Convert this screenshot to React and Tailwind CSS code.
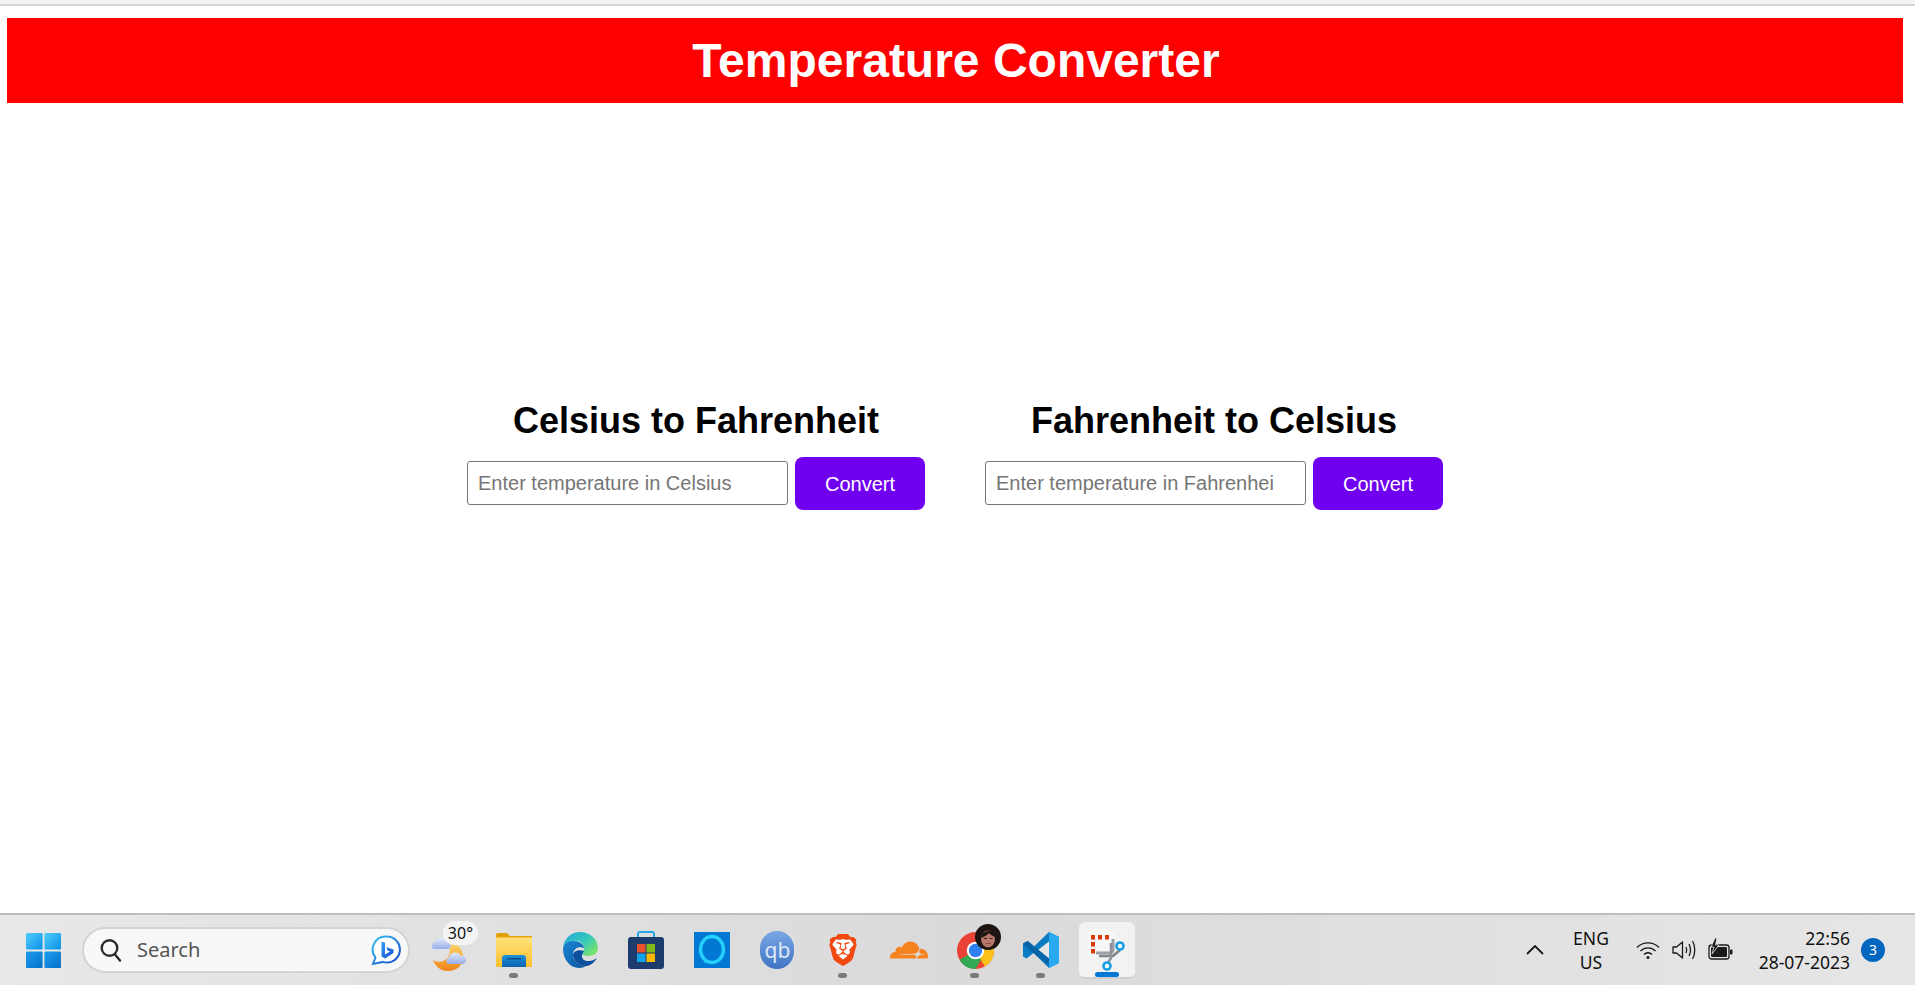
import React from "react";
import { SiBrave, SiCloudflare } from "react-icons/si";

const WindowsLogo = () => (
  <svg width="35" height="35" viewBox="0 0 35 35">
    <defs>
      <linearGradient id="winA" x1="0" y1="0" x2="1" y2="1">
        <stop offset="0" stopColor="#52cdfb" />
        <stop offset="1" stopColor="#0a8fe6" />
      </linearGradient>
      <linearGradient id="winB" x1="0" y1="0" x2="1" y2="1">
        <stop offset="0" stopColor="#1a9fee" />
        <stop offset="1" stopColor="#0670ca" />
      </linearGradient>
    </defs>
    <rect x="0" y="0" width="16.6" height="16.6" rx="1" fill="url(#winA)" />
    <rect x="18.4" y="0" width="16.6" height="16.6" rx="1" fill="url(#winA)" />
    <rect x="0" y="18.4" width="16.6" height="16.6" rx="1" fill="url(#winB)" />
    <rect x="18.4" y="18.4" width="16.6" height="16.6" rx="1" fill="url(#winB)" />
  </svg>
);

const SearchGlyph = () => (
  <svg width="22" height="24" viewBox="0 0 22 24" fill="none" stroke="#2b2b2b" strokeWidth="2.4">
    <circle cx="9.5" cy="10" r="7.8" />
    <path d="M15 16.5l5 6" strokeLinecap="round" />
  </svg>
);

const BingChat = () => (
  <svg width="32" height="32" viewBox="0 0 32 32" fill="none">
    <defs>
      <linearGradient id="bingA" x1="0" y1="0" x2="1" y2="1">
        <stop offset="0" stopColor="#36c3f0" />
        <stop offset="1" stopColor="#1746c9" />
      </linearGradient>
      <linearGradient id="bingB" x1="0" y1="0" x2="0.800" y2="1">
        <stop offset="0" stopColor="#2f9ff0" />
        <stop offset="1" stopColor="#1f55d8" />
      </linearGradient>
    </defs>
    <path d="M17 2.500a13 13 0 1 1-4 25.400L3 30l2.500-6.500A13 13 0 0 1 17 2.500z" stroke="url(#bingA)" strokeWidth="2" fill="#fff" />
    <path d="M11.500 7.500l3.500 1.300v11.700l5-2.900-2.500-1.200-1.300-3.400 7.300 2.600v3.500L15 24.500l-3.500-2z" fill="url(#bingB)" />
  </svg>
);

const WeatherIcon = () => (
  <svg width="36" height="42" viewBox="0 0 36 42">
    <defs>
      <linearGradient id="moon" x1="0" y1="0" x2="0" y2="1">
        <stop offset="0" stopColor="#fbd76a" />
        <stop offset="1" stopColor="#ee8418" />
      </linearGradient>
      <linearGradient id="cloud" x1="0" y1="0" x2="0" y2="1">
        <stop offset="0" stopColor="#e4e9fb" />
        <stop offset="1" stopColor="#98aee8" />
      </linearGradient>
    </defs>
    <path d="M3 29c4 3 12 2 15-3 3-5 2-11 0-14 7-1 15 4 15 14 0 9-7 14-15 14-8 0-13-5-15-11z" fill="url(#moon)" />
    <path d="M3 18a4 4 0 0 1 2-7 6 6 0 0 1 11-1 4 4 0 0 1 2 8z" fill="url(#cloud)" />
    <path d="M18 33a4 4 0 0 1 1-7 6.500 6.500 0 0 1 12-1 4 4 0 0 1 2 8z" fill="url(#cloud)" />
  </svg>
);

const ExplorerIcon = () => (
  <svg width="36" height="34" viewBox="0 0 36 34">
    <defs>
      <linearGradient id="folder" x1="0" y1="0" x2="0" y2="1">
        <stop offset="0" stopColor="#ffe27a" />
        <stop offset="1" stopColor="#fcbf2f" />
      </linearGradient>
      <linearGradient id="drawer" x1="0" y1="0" x2="0" y2="1">
        <stop offset="0" stopColor="#1d93dd" />
        <stop offset="1" stopColor="#0a64ad" />
      </linearGradient>
    </defs>
    <path d="M0 2a2 2 0 0 1 2-2h9l4 4h-15z" fill="#e0a106" />
    <rect x="0" y="3" width="36" height="31" rx="1" fill="#e3a60f" />
    <rect x="0" y="4.500" width="36" height="29.500" rx="1" fill="url(#folder)" />
    <path d="M6 34V25a3 3 0 0 1 3-3h18a3 3 0 0 1 3 3v9z" fill="url(#drawer)" />
    <rect x="11" y="25" width="14" height="1.500" fill="#0b4f86" />
  </svg>
);

const EdgeIcon = () => (
  <svg width="36" height="36" viewBox="0 0 36 36">
    <defs>
      <linearGradient id="edgeTop" x1="0" y1="0" x2="1" y2="0.700">
        <stop offset="0" stopColor="#23a6d8" />
        <stop offset="0.600" stopColor="#35c8bb" />
        <stop offset="1" stopColor="#7be36d" />
      </linearGradient>
      <linearGradient id="edgeLow" x1="0" y1="0" x2="0.800" y2="1">
        <stop offset="0" stopColor="#1a86d4" />
        <stop offset="1" stopColor="#0b5aa5" />
      </linearGradient>
    </defs>
    <path d="M1 17C1 7 9 0 18 0c10 0 18 7 18 16 0 5-4 8-9 8-4 0-7-1-7-3 0-1 2-2 2-5 0-5-5-8-10-7C6 10 1 12 1 17z" fill="url(#edgeTop)" />
    <path d="M1 17c0-5 5-8 11-8 5 0 10 3 10 7-5-2-11 0-11 7 0 6 6 11 13 11-2 1-4 2-7 2-9 0-16-9-16-19z" fill="url(#edgeLow)" />
    <path d="M11 23c0 6 7 12 14 11 4-1 8-4 10-8-3 2-5 3-8 3-5 0-7-2-7-5 0-2 1-3 2-5-5-2-11 0-11 4z" fill="#0d4f9a" />
  </svg>
);

const StoreIcon = () => (
  <svg width="36" height="38" viewBox="0 0 36 38">
    <path d="M10 6V3a2 2 0 0 1 2-2h12a2 2 0 0 1 2 2v3" fill="none" stroke="#27a4e8" strokeWidth="2" />
    <rect x="0" y="6" width="36" height="32" rx="3" fill="#1c3c6e" />
    <rect x="9" y="13" width="8.500" height="8.500" fill="#e9512b" />
    <rect x="18.500" y="13" width="8.500" height="8.500" fill="#7fba1a" />
    <rect x="9" y="22.500" width="8.500" height="8.500" fill="#12a3e8" />
    <rect x="18.500" y="22.500" width="8.500" height="8.500" fill="#fdb900" />
  </svg>
);

const AlexaIcon = () => (
  <svg width="36" height="36" viewBox="0 0 36 36">
    <rect width="36" height="36" fill="#0078d4" />
    <ellipse cx="18" cy="17.500" rx="11.500" ry="13" fill="none" stroke="#23d0fa" strokeWidth="3.400" />
    <path d="M10 31l2-4 4 3z" fill="#23d0fa" />
  </svg>
);

const ChromeIcon = () => (
  <svg width="37" height="37" viewBox="0 0 36 36">
    <circle cx="18" cy="18" r="18" fill="#ea4335" />
    <path d="M18 18L2.400 27A18 18 0 0 0 18 36l9-15z" fill="#34a853" />
    <path d="M18 18l9 15.600A18 18 0 0 0 34.500 11H18z" fill="#fbc116" />
    <circle cx="18" cy="18" r="8.500" fill="#fff" />
    <circle cx="18" cy="18" r="6.500" fill="#2f7fee" />
  </svg>
);

const Avatar = () => (
  <svg width="26" height="26" viewBox="0 0 26 26">
    <circle cx="13" cy="13" r="13" fill="#1d1311" />
    <ellipse cx="13" cy="15" rx="7" ry="8.500" fill="#b5776c" />
    <path d="M6 14c1-5 4-7 8-7s6 3 6 6c-3-1-5-3-6-4-2 2-5 4-8 5z" fill="#1d1311" />
    <rect x="9" y="14" width="3" height="1" fill="#3a2320" />
    <rect x="14.500" y="14" width="3" height="1" fill="#3a2320" />
    <rect x="11" y="19" width="4.500" height="1" fill="#8c3f3f" />
  </svg>
);

const VscodeIcon = () => (
  <svg width="36" height="36" viewBox="0 0 36 36">
    <path d="M26 0l10 5v26l-10 5L10.500 21l-7 5.500L0 24.500v-13L3.500 9.500l7 5.500z" fill="#0a7cc4" />
    <path d="M26 0l10 5v26l-10 5z" fill="#28a9f0" />
    <path d="M26 9.500L15 18l11 8.500z" fill="#e6e6e6" />
    <path d="M3.500 9.500L0 11.500v1l26 21v-7L5 9z" fill="#0865a8" />
  </svg>
);

const SnipIcon = () => (
  <svg width="38" height="42" viewBox="0 0 38 42" fill="none">
    <rect x="0" y="0" width="27" height="26" fill="#f7f7f7" />
    <rect x="3" y="4" width="4" height="4.500" fill="#d83b01" />
    <rect x="10" y="4" width="4" height="4.500" fill="#d83b01" />
    <rect x="17" y="4" width="4" height="4.500" fill="#d83b01" />
    <rect x="3" y="11" width="4" height="4.500" fill="#d83b01" />
    <rect x="3" y="18" width="4" height="4.500" fill="#d83b01" />
    <path d="M8 22h14a3 3 0 0 0 3-3V8" stroke="#9aa0a6" strokeWidth="3" />
    <path d="M11 25h14l7-6" stroke="#7f868c" strokeWidth="2.600" />
    <path d="M23 12v15l-3 5" stroke="#8d9399" strokeWidth="2.600" />
    <circle cx="32" cy="15" r="3.500" stroke="#1b9de2" strokeWidth="2.600" fill="#fff" />
    <circle cx="19" cy="35" r="3.500" stroke="#1b9de2" strokeWidth="2.600" fill="#fff" />
  </svg>
);

const WifiIcon = () => (
  <svg width="24" height="20" viewBox="0 0 24 20" fill="none" stroke="#1a1a1a" strokeWidth="1.300">
    <path d="M1 7.500a15.500 15.500 0 0 1 22 0" />
    <path d="M4.500 11a10.500 10.500 0 0 1 15 0" />
    <path d="M8 14.500a5.500 5.500 0 0 1 8 0" />
    <circle cx="12" cy="17.500" r="1.500" fill="#1a1a1a" stroke="none" />
  </svg>
);

const SpeakerIcon = () => (
  <svg width="25" height="22" viewBox="0 0 25 22" fill="none" stroke="#1a1a1a" strokeWidth="1.300">
    <path d="M1 8v6h3.500l6 5V3l-6 5z" strokeLinejoin="round" />
    <path d="M14 8c1 2 1 4 0 6" />
    <path d="M17 5c2 4 2 8 0 12" />
    <path d="M20.500 2c3 5 3 13 0 18" />
  </svg>
);

const BatteryIcon = () => (
  <svg width="25" height="24" viewBox="0 0 25 24" fill="none">
    <rect x="1" y="7" width="20" height="14" rx="2.500" stroke="#1a1a1a" strokeWidth="1.300" />
    <rect x="3" y="9" width="16" height="10" rx="1" fill="#1a1a1a" />
    <rect x="22" y="11.500" width="2.500" height="5" rx="1" fill="#1a1a1a" />
    <path d="M7 0L3 9h3l-2 7 7-9H7.500L9 0z" fill="#1a1a1a" stroke="#e3e3e3" strokeWidth="0.800" />
  </svg>
);

const Converter = ({ title, placeholder }) => (
  <div className="w-[458px] flex flex-col items-center">
    <h2 className="text-[36px] leading-[41px] font-bold text-black">{title}</h2>
    <div className="mt-[16px] flex items-center gap-[7px]">
      <input
        placeholder={placeholder}
        className="w-[321px] h-[44px] mb-[1px] pl-[10px] pr-[31px] text-[20px] bg-white border border-[#767676] rounded-[3px] placeholder:text-[#757575]"
      />
      <button className="w-[130px] h-[53px] bg-[#7000f0] text-white text-[20px] rounded-lg">Convert</button>
    </div>
  </div>
);

const Slot = ({ running, children }) => (
  <div className="relative w-[65.9px] h-[70px] flex items-center justify-center">
    {children}
    {running && <span className="absolute left-[28px] bottom-[7px] w-[9px] h-[5px] rounded-full bg-[#7b7b7b]" />}
  </div>
);

const App = () => {
  return (
    <div className="h-[985px] flex flex-col overflow-hidden bg-white font-['Liberation_Sans',Arial,sans-serif]">
      <div className="h-[6px] bg-[#f3f3f3] border-b-2 border-[#d5d7da]" />

      <header className="mt-[12px] ml-[7px] mr-[12px] h-[85px] pl-[2px] bg-[#ff0000] flex items-center justify-center">
        <h1 className="text-[48px] leading-none font-bold text-white">Temperature Converter</h1>
      </header>

      <main className="flex-1 pt-[297px] pl-[467px] flex gap-[60px]">
        <Converter title="Celsius to Fahrenheit" placeholder="Enter temperature in Celsius" />
        <Converter title="Fahrenheit to Celsius" placeholder="Enter temperature in Fahrenheit" />
      </main>

      <footer className="h-[72px] shrink-0 flex items-center border-t-2 border-[#bdbdbd] bg-gradient-to-r from-[#e8e8e8] via-[#dadada] to-[#e6e6e6] font-['Noto_Sans',sans-serif]">
        <div className="ml-[26px]">
          <WindowsLogo />
        </div>
        <div className="ml-[21px] w-[328px] h-[46px] flex items-center rounded-full bg-[#f8f8f8] border-2 border-[#d4d4d4] pl-[16px] pr-[6px]">
          <SearchGlyph />
          <span className="ml-[15px] text-[20px] text-[#555555] flex-1">Search</span>
          <BingChat />
        </div>

        <div className="ml-[5px] flex items-center">
          <Slot>
            <div className="relative top-[2px]">
              <WeatherIcon />
              <span className="absolute -top-[10px] left-[13px] w-[35px] h-[24px] rounded-full bg-[#f4f4f4] text-[#111111] text-[16px] leading-[24px] text-center">30°</span>
            </div>
          </Slot>
          <Slot running>
            <ExplorerIcon />
          </Slot>
          <Slot>
            <EdgeIcon />
          </Slot>
          <Slot>
            <StoreIcon />
          </Slot>
          <Slot>
            <AlexaIcon />
          </Slot>
          <Slot>
            <div className="w-[34px] h-[38px] rounded-full bg-gradient-to-b from-[#7aa7e4] to-[#3f73c4] flex items-center justify-center text-[#dfeaf9] text-[21px] leading-none">qb</div>
          </Slot>
          <Slot running>
            <div className="relative w-[32px] h-[32px] flex items-center justify-center">
              <span className="absolute inset-[6px] bg-white rounded-b-full" />
              <SiBrave className="relative w-[32px] h-[32px] text-[#f1490f]" />
            </div>
          </Slot>
          <Slot>
            <SiCloudflare className="w-[38px] h-[38px] text-[#f6821f]" />
          </Slot>
          <Slot running>
            <div className="relative">
              <ChromeIcon />
              <div className="absolute -top-[8px] left-[18px] w-[26px] h-[26px]">
                <Avatar />
              </div>
            </div>
          </Slot>
          <Slot running>
            <VscodeIcon />
          </Slot>
          <div className="relative ml-[5px] w-[56px] h-[57px] rounded-md bg-[#f2f2f2] border-b-2 border-[#cfcfcf] flex items-start pt-[9px] pl-[9px]">
            <SnipIcon />
            <span className="absolute left-[16px] bottom-[0px] w-[24px] h-[5px] rounded-full bg-[#0078d4]" />
          </div>
        </div>

        <div className="ml-auto flex items-center text-[#111111]">
          <svg width="18" height="10" viewBox="0 0 18 10" fill="none" stroke="#1a1a1a" strokeWidth="1.800">
            <path d="M1 9l8-8 8 8" />
          </svg>
          <div className="ml-[25px] w-[44px] text-center text-[17.5px] leading-[24px]">
            <div>ENG</div>
            <div>US</div>
          </div>
          <div className="ml-[23px]">
            <WifiIcon />
          </div>
          <div className="ml-[12px]">
            <SpeakerIcon />
          </div>
          <div className="ml-[11px]">
            <BatteryIcon />
          </div>
          <div className="ml-[25px] w-[92px] text-right text-[17.5px] leading-[24px]">
            <div>22:56</div>
            <div className="whitespace-nowrap">28-07-2023</div>
          </div>
          <div className="ml-[11px] mr-[30px] w-[24px] h-[24px] rounded-full bg-[#0067c0] text-white text-[14px] leading-[24px] text-center">3</div>
        </div>
      </footer>
    </div>
  );
};

export default App;
